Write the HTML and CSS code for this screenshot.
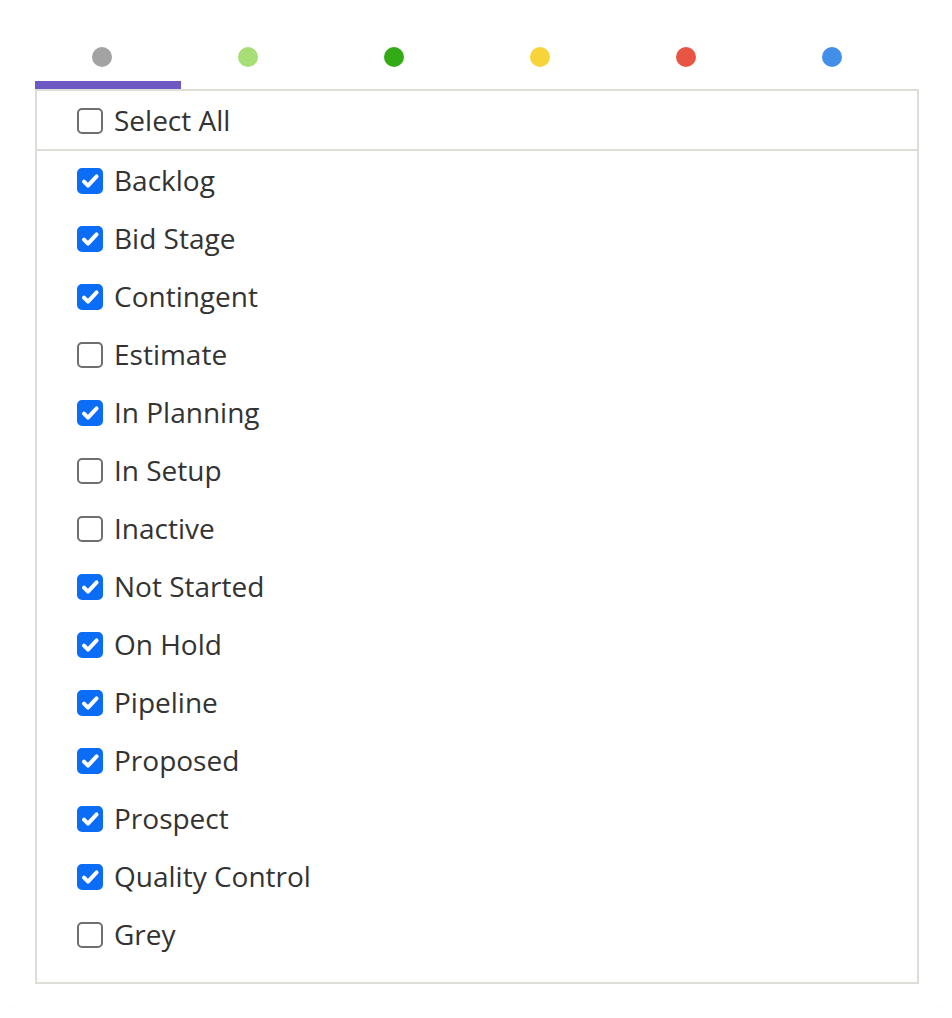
FILE: index.html
```html
<!DOCTYPE html>
<html>
<head>
<meta charset="utf-8">
<link rel="stylesheet" href="styles.css">
</head>
<body>
<div class="card">
  <div class="tabs">
    <div class="tab active"><span class="dot" style="background:#a3a3a3"></span></div>
    <div class="tab"><span class="dot" style="background:#a7de76"></span></div>
    <div class="tab"><span class="dot" style="background:#33ab16"></span></div>
    <div class="tab"><span class="dot" style="background:#f8d43b"></span></div>
    <div class="tab"><span class="dot" style="background:#e85543"></span></div>
    <div class="tab"><span class="dot" style="background:#438ee9"></span></div>
  </div>
  <div class="box">
    <div class="row header"><span class="cb"></span><span class="label">Select All</span></div>
    <div class="list">
      <div class="row"><span class="cb on"><svg viewBox="0 0 26 26"><path d="M7 13.6 L11 17.6 L19.6 8.4"/></svg></span><span class="label">Backlog</span></div>
      <div class="row"><span class="cb on"><svg viewBox="0 0 26 26"><path d="M7 13.6 L11 17.6 L19.6 8.4"/></svg></span><span class="label">Bid Stage</span></div>
      <div class="row"><span class="cb on"><svg viewBox="0 0 26 26"><path d="M7 13.6 L11 17.6 L19.6 8.4"/></svg></span><span class="label">Contingent</span></div>
      <div class="row"><span class="cb"></span><span class="label">Estimate</span></div>
      <div class="row"><span class="cb on"><svg viewBox="0 0 26 26"><path d="M7 13.6 L11 17.6 L19.6 8.4"/></svg></span><span class="label">In Planning</span></div>
      <div class="row"><span class="cb"></span><span class="label">In Setup</span></div>
      <div class="row"><span class="cb"></span><span class="label">Inactive</span></div>
      <div class="row"><span class="cb on"><svg viewBox="0 0 26 26"><path d="M7 13.6 L11 17.6 L19.6 8.4"/></svg></span><span class="label">Not Started</span></div>
      <div class="row"><span class="cb on"><svg viewBox="0 0 26 26"><path d="M7 13.6 L11 17.6 L19.6 8.4"/></svg></span><span class="label">On Hold</span></div>
      <div class="row"><span class="cb on"><svg viewBox="0 0 26 26"><path d="M7 13.6 L11 17.6 L19.6 8.4"/></svg></span><span class="label">Pipeline</span></div>
      <div class="row"><span class="cb on"><svg viewBox="0 0 26 26"><path d="M7 13.6 L11 17.6 L19.6 8.4"/></svg></span><span class="label">Proposed</span></div>
      <div class="row"><span class="cb on"><svg viewBox="0 0 26 26"><path d="M7 13.6 L11 17.6 L19.6 8.4"/></svg></span><span class="label">Prospect</span></div>
      <div class="row"><span class="cb on"><svg viewBox="0 0 26 26"><path d="M7 13.6 L11 17.6 L19.6 8.4"/></svg></span><span class="label">Quality Control</span></div>
      <div class="row"><span class="cb"></span><span class="label">Grey</span></div>
    </div>
  </div>
</div>
</body>
</html>
```

FILE: styles.css
```css
html, body {
  margin: 0;
  padding: 0;
  background: #ffffff;
}
body {
  font-family: "Open Sans", "Noto Sans", sans-serif;
  color: #333333;
}
.card {
  margin: 0 5px;
  padding: 47px 28px 24px 30px;
  width: 884px;
  box-shadow: 0 14px 14px -8px rgba(0, 0, 0, 0.025);
  border-radius: 0 0 14px 14px;
}
.tabs {
  display: flex;
}
.tab {
  width: 146px;
  padding-bottom: 14px;
  border-bottom: 8px solid transparent;
  display: flex;
  justify-content: center;
}
.tab.active {
  border-bottom-color: #6e58c4;
}
.dot {
  display: block;
  width: 20px;
  height: 20px;
  border-radius: 50%;
  margin-right: 13px;
}
.box {
  border: 2px solid #deded9;
}
.row {
  display: flex;
  align-items: center;
  height: 58px;
  padding-left: 40px;
}
.row.header {
  border-bottom: 2px solid #deded9;
}
.list {
  padding-bottom: 19px;
}
.cb {
  box-sizing: border-box;
  width: 26px;
  height: 26px;
  border: 2px solid #6f6f6f;
  border-radius: 5px;
  flex: none;
  display: block;
  margin-top: 1px;
}
.cb.on {
  background: #0b6cf6;
  border-color: #0b6cf6;
  position: relative;
}
.cb svg {
  position: absolute;
  left: -2px;
  top: -2px;
  width: 26px;
  height: 26px;
}
.cb svg path {
  fill: none;
  stroke: #ffffff;
  stroke-width: 4;
  stroke-linecap: round;
  stroke-linejoin: round;
}
.label {
  font-size: 28px;
  margin-left: 11px;
  line-height: 1;
}
```
